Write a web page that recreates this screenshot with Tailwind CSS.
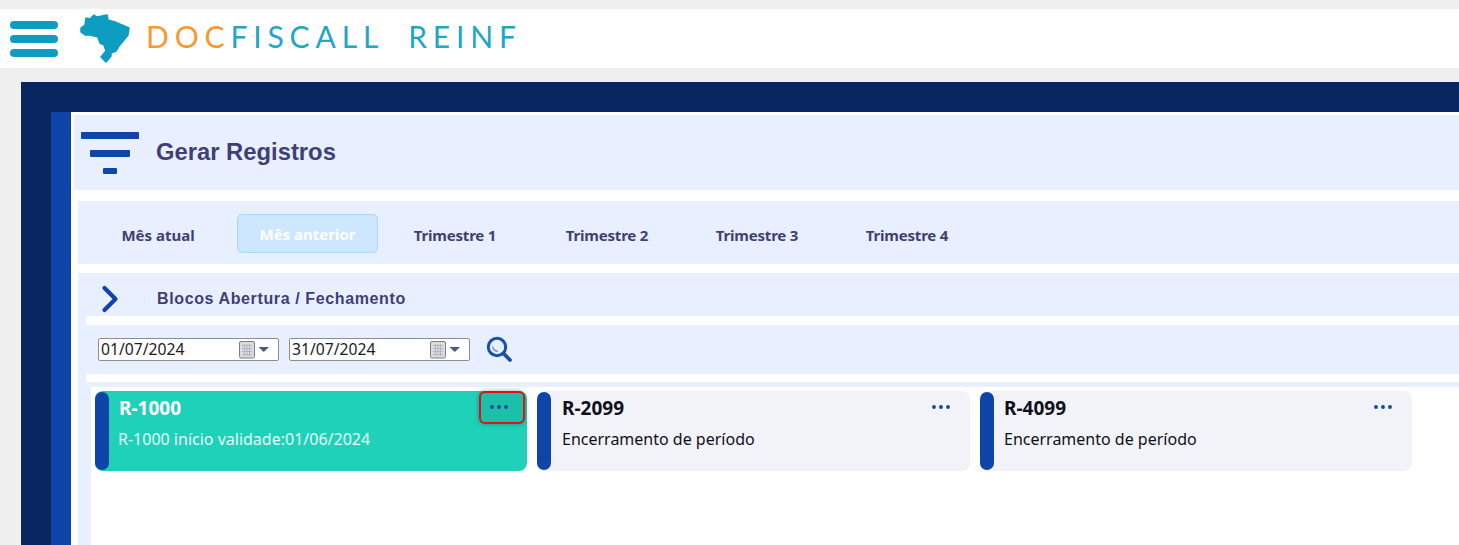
<!DOCTYPE html>
<html lang="pt-BR">
<head>
<meta charset="utf-8">
<title>DocFiscall Reinf</title>
<script src="https://cdn.jsdelivr.net/npm/@tailwindcss/browser@4"></script>
</head>
<body class="m-0 h-[545px] overflow-hidden bg-[#f0f0f0] font-['Liberation_Sans',sans-serif]">
<div class="flex h-[545px] flex-col pt-[9px]">
  <header class="flex h-[59px] shrink-0 items-center bg-white">
    <div class="ml-[10px] mt-[1px] flex h-[36px] w-[48px] flex-col justify-between">
      <span class="h-[8px] rounded-full bg-[#0e9cc0]"></span>
      <span class="h-[8px] rounded-full bg-[#0e9cc0]"></span>
      <span class="h-[8px] rounded-full bg-[#0e9cc0]"></span>
    </div>
    <svg class="ml-[22px] -mt-[2px]" width="50" height="50" viewBox="0 0 50 50"><path fill="#0e9cc0" stroke="#0e9cc0" stroke-width="1.500" stroke-linejoin="round" d="M1 15 L5 12 L6 5 L10 6 L14 2 L17 4 L27 2 L28 7 L35 9 L49 15 L48 22 L44 27 L39 33 L36 38 L31 40 L31 43 L26 49 L21 44 L26 38 L24 32 L20 30 L18 24 L10 22 L5 22 L1 19 Z"/></svg>
    <div class="ml-[16px] -mt-[6px] whitespace-nowrap font-['Lato',sans-serif] text-[30px] leading-none tracking-[5.85px] text-[#22a6c6]"><span class="text-[#f59a33]">DOC</span>FISCALL<span class="ml-[24px]">REINF</span></div>
  </header>

  <main class="ml-[21px] mt-[14px] flex min-h-0 flex-1 bg-[#0a2660] pl-[30px] pt-[30px]">
    <div class="flex min-w-0 flex-1 flex-col border-l-[20px] border-[#0f45a8] bg-white pl-[3px] pt-[3px]">
      <section class="flex h-[75px] shrink-0 items-center bg-[#e8effe]">
        <div class="ml-[7px] flex w-[58px] flex-col items-center">
          <span class="h-[7px] w-[58px] rounded-[1px] bg-[#0f45a8]"></span>
          <span class="mt-[11px] h-[7px] w-[40px] rounded-[1px] bg-[#0f45a8]"></span>
          <span class="mt-[11px] h-[6px] w-[14px] rounded-[1px] bg-[#0f45a8]"></span>
        </div>
        <h1 class="mb-[2px] ml-[17px] text-[23.8px] font-bold text-[#3f3f78]">Gerar Registros</h1>
      </section>

      <nav class="ml-[4px] mt-[11px] flex h-[63px] shrink-0 items-center bg-[#e8effe] pt-[2px] font-['Noto_Sans',sans-serif] text-[15px] font-bold text-[#3f3f78]">
        <button class="ml-[10px] h-[39px] w-[140px] pt-[3px] text-center">Mês atual</button>
        <button class="ml-[9px] h-[39px] w-[141px] rounded-[5px] border border-[#a8d8fb] bg-[#cce7ff] pt-[2px] text-center text-white">Mês anterior</button>
        <button class="ml-[7px] h-[39px] w-[140px] pt-[3px] text-center tracking-[-0.2px]">Trimestre 1</button>
        <button class="ml-[12px] h-[39px] w-[140px] pt-[3px] text-center tracking-[-0.2px]">Trimestre 2</button>
        <button class="ml-[10px] h-[39px] w-[140px] pt-[3px] text-center tracking-[-0.2px]">Trimestre 3</button>
        <button class="ml-[10px] h-[39px] w-[140px] pt-[3px] text-center tracking-[-0.2px]">Trimestre 4</button>
      </nav>

      <section class="ml-[4px] mt-[9px] flex min-h-0 flex-1 flex-col bg-[#e8effe]">
        <div class="flex h-[43px] shrink-0 items-center pt-[8px]">
          <svg class="ml-[23px]" width="18" height="28" viewBox="0 0 18 28"><path d="M3.500 3 L14.500 14 L3.500 25" fill="none" stroke="#0f45a8" stroke-width="4.200" stroke-linecap="round" stroke-linejoin="round"/></svg>
          <span class="ml-[38px] text-[16px] font-bold tracking-[0.62px] text-[#3f3f78]">Blocos Abertura / Fechamento</span>
        </div>
        <div class="ml-[8px] flex min-h-0 flex-1 flex-col bg-white pt-[9px]">
          <div class="flex h-[49px] shrink-0 items-center bg-[#e8effe] pl-[12px]">
            <div class="flex h-[23px] w-[181px] items-center rounded-[2px] border border-[#8d8d8d] bg-white pl-[2px] font-['Noto_Sans',sans-serif] text-[15.7px] text-[#1a1a2a]">
              <span class="flex-1">01/07/2024</span>
              <svg class="mr-[9px]" width="30" height="18" viewBox="0 0 30 18"><rect x="0.500" y="0.500" width="15" height="16.500" rx="1.500" fill="#d9dde2" stroke="#7e7e7e"/><path d="M3 4.500H13M3 7.500H13M3 10.500H13M3 13.500H13M5.500 3V15M8 3V15M10.500 3V15" stroke="#b3b8bf" stroke-width="1"/><path d="M19.500 6H30L24.750 11Z" fill="#4a5a78"/></svg>
            </div>
            <div class="ml-[10px] flex h-[23px] w-[181px] items-center rounded-[2px] border border-[#8d8d8d] bg-white pl-[2px] font-['Noto_Sans',sans-serif] text-[15.7px] text-[#1a1a2a]">
              <span class="flex-1">31/07/2024</span>
              <svg class="mr-[9px]" width="30" height="18" viewBox="0 0 30 18"><rect x="0.500" y="0.500" width="15" height="16.500" rx="1.500" fill="#d9dde2" stroke="#7e7e7e"/><path d="M3 4.500H13M3 7.500H13M3 10.500H13M3 13.500H13M5.500 3V15M8 3V15M10.500 3V15" stroke="#b3b8bf" stroke-width="1"/><path d="M19.500 6H30L24.750 11Z" fill="#4a5a78"/></svg>
            </div>
            <svg class="-mt-[2px] ml-[16px]" width="26" height="26" viewBox="0 0 26 26"><circle cx="11" cy="11" r="8.700" fill="none" stroke="#1a50a8" stroke-width="3"/><path d="M17.500 17.500L24 24" stroke="#1a50a8" stroke-width="3.800" stroke-linecap="round"/><path d="M6.500 10.500C7 13 9 15 12 15.500" fill="none" stroke="#7d9ccf" stroke-width="1.500"/></svg>
          </div>
          <div class="mt-[8px] flex min-h-0 flex-1 flex-col bg-[#e8effe] pt-[5px]">
            <div class="ml-[5px] flex flex-1 items-start gap-[10px] bg-white pl-[4px] pt-[4px] font-['Noto_Sans',sans-serif]">

              <article class="relative flex h-[80px] w-[432px] shrink-0 rounded-[8px] bg-[#1fd1b8] text-white">
                <span class="mt-[1px] h-[78px] w-[14px] rounded-[7px] bg-[#0f45a8]"></span>
                <div class="pl-[10px]">
                  <h2 class="mt-[3px] text-[19px] font-bold leading-[28px]">R-1000</h2>
                  <p class="-ml-[1px] mt-[7px] text-[16px] leading-[20px] text-[#e9fbf7]">R-1000 início validade:01/06/2024</p>
                </div>
                <button class="absolute right-[2px] top-0 flex h-[33px] w-[46px] items-center justify-center rounded-[6px] border-2 border-[#e3101c] bg-[#1cc0a9] pb-[2px] pr-[6px] shadow-[0_0_4px_rgba(0,60,60,0.45)]">
                  <svg width="18" height="4" viewBox="0 0 18 4"><circle cx="2" cy="2" r="1.900" fill="#0f45a8"/><circle cx="9" cy="2" r="1.900" fill="#0f45a8"/><circle cx="16" cy="2" r="1.900" fill="#0f45a8"/></svg>
                </button>
              </article>

              <article class="relative flex h-[80px] w-[433px] shrink-0 rounded-[8px] bg-[#f1f3f8] text-[#10101c]">
                <span class="mt-[1px] h-[78px] w-[14px] rounded-[7px] bg-[#0f45a8]"></span>
                <div class="pl-[11px]">
                  <h2 class="mt-[3px] text-[19px] font-bold leading-[28px]">R-2099</h2>
                  <p class="mt-[7px] text-[16px] leading-[20px]">Encerramento de período</p>
                </div>
                <button class="absolute right-[6px] top-0 flex h-[33px] w-[46px] items-center justify-center pb-[2px]">
                  <svg width="18" height="4" viewBox="0 0 18 4"><circle cx="2" cy="2" r="1.900" fill="#0f45a8"/><circle cx="9" cy="2" r="1.900" fill="#0f45a8"/><circle cx="16" cy="2" r="1.900" fill="#0f45a8"/></svg>
                </button>
              </article>

              <article class="relative flex h-[80px] w-[432px] shrink-0 rounded-[8px] bg-[#f1f3f8] text-[#10101c]">
                <span class="mt-[1px] h-[78px] w-[14px] rounded-[7px] bg-[#0f45a8]"></span>
                <div class="pl-[10px]">
                  <h2 class="mt-[3px] text-[19px] font-bold leading-[28px]">R-4099</h2>
                  <p class="mt-[7px] text-[16px] leading-[20px]">Encerramento de período</p>
                </div>
                <button class="absolute right-[6px] top-0 flex h-[33px] w-[46px] items-center justify-center pb-[2px]">
                  <svg width="18" height="4" viewBox="0 0 18 4"><circle cx="2" cy="2" r="1.900" fill="#0f45a8"/><circle cx="9" cy="2" r="1.900" fill="#0f45a8"/><circle cx="16" cy="2" r="1.900" fill="#0f45a8"/></svg>
                </button>
              </article>

            </div>
          </div>
        </div>
      </section>
    </div>
  </main>
</div>
</body>
</html>
